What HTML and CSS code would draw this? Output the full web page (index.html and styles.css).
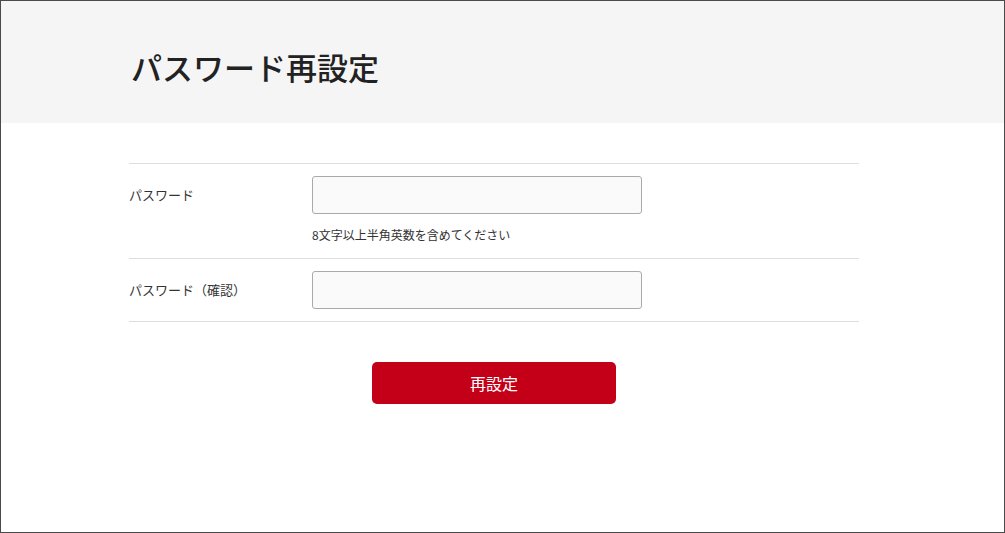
FILE: index.html
```html
<!DOCTYPE html>
<html lang="ja">
<head>
<meta charset="utf-8">
<title>パスワード再設定</title>
<link rel="stylesheet" href="styles.css">
</head>
<body>
<div class="frame">
  <header class="page-head">
    <div class="container">
      <h1 class="title">パスワード再設定</h1>
    </div>
  </header>
  <main class="container form-area">
    <div class="row">
      <div class="label">パスワード</div>
      <div class="field">
        <input class="input" type="password">
        <p class="hint">8文字以上半角英数を含めてください</p>
      </div>
    </div>
    <div class="row">
      <div class="label">パスワード（確認）</div>
      <div class="field">
        <input class="input" type="password">
      </div>
    </div>
    <div class="actions">
      <button class="submit" type="button">再設定</button>
    </div>
  </main>
</div>
</body>
</html>
```

FILE: styles.css
```css
* { box-sizing: border-box; }
html, body { margin: 0; padding: 0; }
body {
  font-family: "Noto Sans CJK JP", "Noto Sans", sans-serif;
  color: #333;
  background: #fff;
}
.frame {
  width: 1005px;
  height: 533px;
  border: 1px solid #4a4a4a;
  overflow: hidden;
}
.container {
  width: 730px;
  margin-left: 128px;
}
.page-head {
  background: #f5f5f5;
  height: 122px;
  display: flex;
  align-items: center;
  padding-top: 10px;
}
.title {
  margin: 0;
  padding-left: 2px;
  font-size: 31px;
  font-weight: 500;
  color: #222;
  line-height: 1.2;
  letter-spacing: 0;
}
.form-area {
  margin-top: 40px;
  border-top: 1px solid #dedede;
}
.row {
  display: flex;
  padding: 12px 0;
  border-bottom: 1px solid #dedede;
}
.label {
  width: 183px;
  font-size: 13px;
  line-height: 38px;
  color: #333;
}
.field { display: flex; flex-direction: column; }
.input {
  width: 330px;
  height: 38px;
  border: 1px solid #aaa;
  border-radius: 3px;
  background: #fafafa;
  margin: 0;
}
.hint {
  margin: 11px 0 1px;
  font-size: 12px;
  line-height: 20px;
  color: #333;
}
.actions {
  display: flex;
  justify-content: center;
  margin-top: 40px;
}
.submit {
  width: 244px;
  height: 42px;
  border: 0;
  border-radius: 5px;
  background: #c40018;
  color: #fff;
  font-family: inherit;
  font-size: 16px;
  cursor: pointer;
}
```
